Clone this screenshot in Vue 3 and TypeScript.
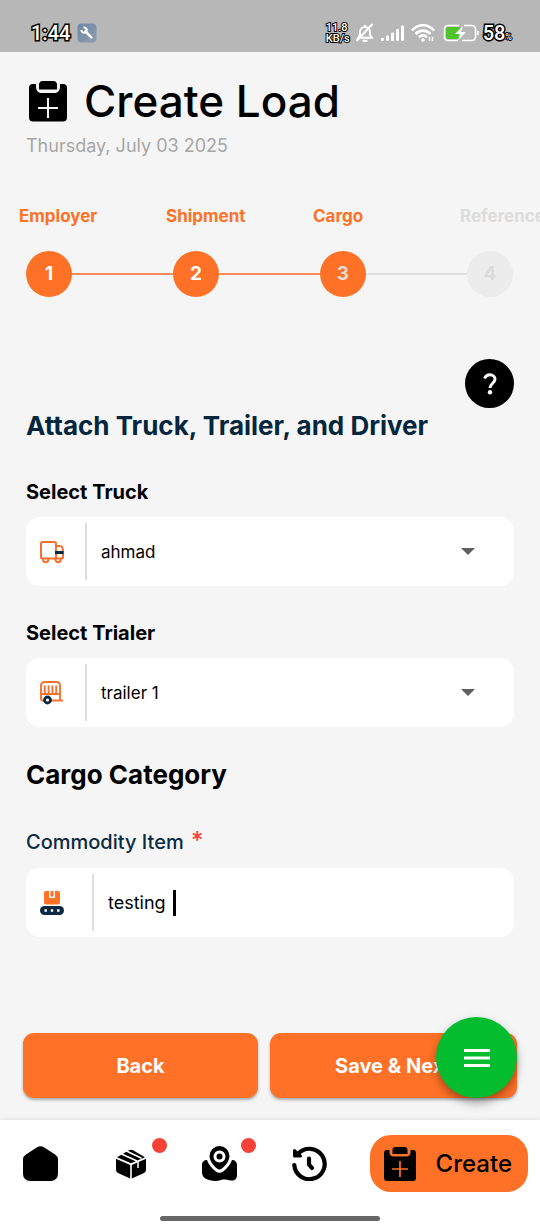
<script setup lang="ts">
import { ref } from 'vue'

interface Step {
  label: string
  state: 'done' | 'current' | 'upcoming'
}

const steps: Step[] = [
  { label: 'Employer', state: 'done' },
  { label: 'Shipment', state: 'done' },
  { label: 'Cargo', state: 'current' },
  { label: 'Reference', state: 'upcoming' },
]

const truck = ref('ahmad')
const trailer = ref('trailer 1')
const commodity = ref('testing ')
</script>

<template>
  <div class="screen">
    <header class="status">
      <span class="outlined clock">1:44</span>
      <svg class="tool" viewBox="0 0 20 20" aria-hidden="true">
        <defs>
          <linearGradient id="toolFill" x1="0" y1="0" x2="1" y2="1">
            <stop offset="0" stop-color="#6f87a6" />
            <stop offset="1" stop-color="#8e9db0" />
          </linearGradient>
        </defs>
        <rect x="0.5" y="0.5" width="19" height="19" rx="4" fill="url(#toolFill)" />
        <path d="M8.500 8.500l5.800 5.800" stroke="#fff" stroke-width="2.600" stroke-linecap="round" />
        <circle cx="7" cy="7" r="2.600" fill="none" stroke="#fff" stroke-width="2" stroke-dasharray="12.500 4" stroke-dashoffset="-1.500" transform="rotate(225 7 7)" />
      </svg>
      <div class="status-right">
        <span class="outlined speed">11.8<br />KB/s</span>
        <svg class="bell" viewBox="0 0 20 20" fill="none" stroke="#fff" stroke-width="2" aria-hidden="true">
          <path d="M5 14.500V9a5 5 0 0 1 10 0v3l1.800 2.800H3.200L5 12M10 2v2M1.500 18L17.500 1" />
          <path d="M7.500 17.800h5" stroke-width="2.200" />
        </svg>
        <svg class="signal" viewBox="0 0 24 18" fill="#fff" aria-hidden="true">
          <rect x="0" y="14" width="3" height="3" rx="1" />
          <rect x="5" y="11.500" width="3" height="5.500" rx="1" />
          <rect x="10" y="8.500" width="3" height="8.500" rx="1" />
          <rect x="15" y="5" width="3" height="12" rx="1" />
          <rect x="20" y="1.500" width="3" height="15.500" rx="1" />
        </svg>
        <svg class="wifi" viewBox="0 0 24 20" fill="none" stroke="#fff" stroke-width="2.600" aria-hidden="true">
          <path d="M1 7.500C7 .5 17 .5 23 7.500M4.500 11c4.500-4.500 10.500-4.500 15 0M8 14.300c2.500-2.300 5.500-2.300 8 0" />
          <circle cx="12" cy="17" r="1.300" fill="#fff" stroke-width="1" />
          <path d="M18.500 14v4M21.500 14v4" stroke-width="1.500" />
        </svg>
        <svg class="battery" viewBox="0 0 36 18" aria-hidden="true">
          <path d="M5 3h12v12H5a2 2 0 0 1-2-2V5a2 2 0 0 1 2-2z" fill="#51c32b" />
          <path d="M16 1.500H5A3.500 3.500 0 0 0 1.500 5v8A3.500 3.500 0 0 0 5 16.500h10M21 1.500h8A3.500 3.500 0 0 1 32.500 5v8a3.500 3.500 0 0 1-3.500 3.500H19" fill="none" stroke="#fff" stroke-width="1.600" />
          <path d="M20 2l-8 8h5l-2 6.500 8-8.500h-5z" fill="#fff" />
          <path d="M34.800 7v4" stroke="#fff" stroke-width="1.800" />
        </svg>
        <span class="outlined percent">58<small>%</small></span>
      </div>
    </header>

    <main class="content">
      <div class="title-row">
        <svg class="title-icon" viewBox="0 0 38 41" aria-hidden="true">
          <path d="M4 3h3v2.500C7 9.500 9 12 12.500 12h13c3.500 0 5.500-2.500 5.500-6.500V3h3a4 4 0 0 1 4 4v29.500a4 4 0 0 1-4 4H4a4 4 0 0 1-4-4V7a4 4 0 0 1 4-4z" />
          <path d="M14 0h10a4 4 0 0 1 4 4v4.500H10V4a4 4 0 0 1 4-4z" />
          <path d="M19 17v20M9 27h20" stroke="#f5f5f5" stroke-width="2" />
        </svg>
        <h1>Create Load</h1>
      </div>
      <p class="date">Thursday, July 03 2025</p>

      <ol class="steps">
        <li v-for="(step, i) in steps" :key="step.label" :class="['step', step.state]">
          <span class="step-label">{{ step.label }}</span>
          <span class="step-track">
            <span class="step-dot">{{ i + 1 }}</span>
            <span v-if="i < steps.length - 1" class="step-line"></span>
          </span>
        </li>
      </ol>

      <button class="help" type="button" aria-label="Help">
        <svg viewBox="0 0 14 22" aria-hidden="true">
          <path d="M1.600 5.500C2.500 3 4.500 1.800 7 1.800c3 0 5 1.900 5 4.500 0 3.800-5 4.200-5 8.700" fill="none" stroke="#fff" stroke-width="3" />
          <circle cx="7" cy="19.300" r="2.200" fill="#fff" />
        </svg>
      </button>

      <h2 class="attach">Attach Truck, Trailer, and Driver</h2>

      <label class="label strong" for="truck">Select Truck</label>
      <div class="field">
        <span class="field-icon">
          <svg viewBox="0 0 24 24" fill="none" stroke="#f6712f" stroke-width="2" aria-hidden="true">
            <path d="M3 18.500H2.500A1.500 1.500 0 0 1 1 17V3.500A1.500 1.500 0 0 1 2.500 2h12A1.500 1.500 0 0 1 16 3.500v15H8.500M16 6h3.500C22 6 23 8.500 23 11v6a1.500 1.500 0 0 1-1.500 1.500H21" />
            <path d="M3 18.500v1a2.600 2.600 0 0 0 5.300 0v-1zM15.500 18.500v1a2.600 2.600 0 0 0 5.300 0v-1z" />
            <path d="M15 12.500h8.500" stroke="#0b2a42" stroke-width="3" />
          </svg>
        </span>
        <select id="truck" v-model="truck">
          <option>ahmad</option>
        </select>
        <svg class="arrow" viewBox="0 0 14 7" aria-hidden="true"><path d="M0 0h14L7 7z" /></svg>
      </div>

      <label class="label strong" for="trailer">Select Trialer</label>
      <div class="field">
        <span class="field-icon">
          <svg viewBox="0 0 24 24" fill="none" stroke="#f6712f" stroke-width="1.900" aria-hidden="true">
            <path d="M4 19.500H2.500A1.500 1.500 0 0 1 1 18V4.500A3.500 3.500 0 0 1 4.500 1h12A3.500 3.500 0 0 1 20 4.500v15M10 19.500h13M1 13h19M4.800 4.500V13M8.600 4.500V13M12.400 4.500V13M16.200 4.500V13" />
            <circle cx="7.500" cy="19" r="3" fill="#fff" stroke="#0b2a42" stroke-width="2.800" />
          </svg>
        </span>
        <select id="trailer" v-model="trailer">
          <option>trailer 1</option>
        </select>
        <svg class="arrow" viewBox="0 0 14 7" aria-hidden="true"><path d="M0 0h14L7 7z" /></svg>
      </div>

      <h2 class="category">Cargo Category</h2>

      <label class="label" for="commodity">Commodity Item <span class="required">*</span></label>
      <div class="field last">
        <span class="field-icon wide">
          <svg viewBox="0 0 24 24" aria-hidden="true">
            <rect x="4" y="0" width="16" height="13.500" rx="2" fill="#ff7126" />
            <path d="M9.800 0v6.300h4.400V0" fill="none" stroke="#fff" stroke-width="1.400" />
            <rect x="0" y="15" width="24" height="9" rx="4.500" fill="#0b2a42" />
            <path d="M4.500 19.500h2.400M10.800 19.500h2.400M17.100 19.500h2.400" stroke="#fff" stroke-width="2.400" />
          </svg>
        </span>
        <input id="commodity" v-model="commodity" type="text" autocomplete="off" />
        <span class="caret"></span>
      </div>

      <div class="actions">
        <button type="button">Back</button>
        <button type="button">Save &amp; Next</button>
        <button class="fab" type="button" aria-label="Menu">
          <svg viewBox="0 0 26 18" aria-hidden="true"><path d="M0 1.500h26M0 9h26M0 16.500h26" stroke="#fff" stroke-width="2.800" /></svg>
        </button>
      </div>
    </main>

    <nav class="nav">
      <div class="nav-row">
        <div class="tabs">
          <a href="#home" aria-label="Home">
            <svg viewBox="0 0 35 35"><path d="M14 1.300a7 7 0 0 1 7 0L32 8.500a6 6 0 0 1 3 5V28a7 7 0 0 1-7 7H7a7 7 0 0 1-7-7V13.500a6 6 0 0 1 3-5z" /></svg>
          </a>
          <a href="#loads" aria-label="Loads">
            <svg viewBox="0 0 35 35">
              <path d="M3 12.800l14.200 6.200V32.500L5 27a3.500 3.500 0 0 1-2-3zM18.800 19L33 12.800V24a3.500 3.500 0 0 1-2 3l-12.200 5.500z" />
              <path d="M4 11.200L16 4.200a4.500 4.500 0 0 1 4 0L32 11.200L18 17.300z" />
              <path d="M8.500 8L24 15M13.500 5L28.500 12.200M25 15.500V22" fill="none" stroke="#fff" stroke-width="1.500" />
            </svg>
            <i class="badge"></i>
          </a>
          <a href="#map" aria-label="Map">
            <svg viewBox="0 0 35 35">
              <path fill-rule="evenodd" d="M17.500 0a10 10 0 0 1 10 10c0 4.500-3.500 9-7.500 12.500a3.800 3.800 0 0 1-5 0C11 19 7.500 14.500 7.500 10a10 10 0 0 1 10-10zm0 4.500a6 6 0 1 0 0 12a6 6 0 1 0 0-12z" />
              <circle cx="17.500" cy="10.500" r="3" />
              <path d="M5 14c1.500 4.500 5 8.500 8.500 11.300a6.500 6.500 0 0 0 8 0C25 22.500 28.500 18.500 30 14c3 0 5 2 5 5v10c0 4-2.500 6-6 5.500c-4-.6-7-1.500-10-.5c-4 1.300-7.500 1.300-11 .2C3 33 0 31 0 26v-7c0-3 2-5 5-5z" />
            </svg>
            <i class="badge"></i>
          </a>
          <a href="#history" aria-label="History">
            <svg viewBox="0 0 35 35" fill="none" stroke="#000" stroke-width="4.200" stroke-linecap="round">
              <path d="M6 8A15.200 15.200 0 1 1 2.300 19M17 12.500v6l3 3.500" />
              <path d="M2.500 4.500v5.500H8.500z" fill="#000" stroke-width="3" stroke-linejoin="round" />
            </svg>
          </a>
        </div>
        <button class="create" type="button">
          <svg viewBox="0 0 32 34" aria-hidden="true">
            <path d="M3 3h2.500v2c0 3 1.500 4.500 4.500 4.500h12c3 0 4.500-1.500 4.500-4.500V3H29a3 3 0 0 1 3 3v25a3 3 0 0 1-3 3H3a3 3 0 0 1-3-3V6a3 3 0 0 1 3-3z" />
            <path d="M11.500 0h9a3 3 0 0 1 3 3v4h-15V3a3 3 0 0 1 3-3z" />
            <path d="M16 14v16M8 22h16" stroke="#ff7126" stroke-width="1.700" />
          </svg>
          <span>Create</span>
        </button>
      </div>
      <div class="home-bar"></div>
    </nav>
  </div>
</template>

<style>
html,
body {
  margin: 0;
  background: #f5f5f5;
}
</style>

<style scoped>
.screen {
  display: flex;
  flex-direction: column;
  min-height: 100vh;
  overflow: hidden;
  background: #f5f5f5;
  color: #000;
  font-family: Inter, "Liberation Sans", sans-serif;
}
* {
  box-sizing: border-box;
}
svg {
  display: block;
  flex: none;
}
button {
  border: 0;
  padding: 0;
  font: inherit;
  color: inherit;
  cursor: pointer;
}
.status {
  display: flex;
  align-items: center;
  height: 52px;
  padding: 13px 28px 0 31px;
  background: #b7b7b7;
}
.outlined {
  color: #fff;
  font-family: Roboto, sans-serif;
  font-weight: 500;
  -webkit-text-stroke: 3px #000;
  paint-order: stroke fill;
}
.clock {
  font-size: 20px;
}
.tool {
  width: 20px;
  height: 20px;
  margin-left: 7px;
}
.status-right {
  display: flex;
  align-items: center;
  margin-left: auto;
}
.speed {
  font-size: 11px;
  line-height: 11px;
  -webkit-text-stroke-width: 2px;
}
.bell {
  width: 20px;
  height: 20px;
  margin-left: 5px;
}
.signal {
  width: 24px;
  height: 18px;
  margin-left: 6px;
}
.wifi {
  width: 24px;
  height: 20px;
  margin-left: 6px;
}
.battery {
  width: 36px;
  height: 18px;
  margin-left: 8px;
}
.percent {
  margin-left: 4px;
  font-size: 20px;
}
.percent small {
  font-size: 9px;
  -webkit-text-stroke-width: 2px;
}
.content {
  flex: 1;
  display: flex;
  flex-direction: column;
  padding: 24px 26px 22px;
}
.title-row {
  display: flex;
  align-items: center;
  gap: 17px;
  padding-left: 3px;
}
.title-icon {
  width: 38px;
  height: 41px;
}
h1,
h2,
p,
ol {
  margin: 0;
}
h1 {
  font-size: 44px;
  line-height: 50px;
  font-weight: 500;
}
.date {
  margin-top: 10px;
  color: #a6a6a6;
  font-size: 18px;
  line-height: 20px;
}
.steps {
  display: flex;
  margin-top: 50px;
  padding: 0;
  list-style: none;
  color: #ff7126;
  font-weight: 700;
}
.step {
  flex: 1;
}
.step:last-child {
  flex: none;
  width: 47px;
}
.step-label {
  display: block;
  margin-left: -7px;
  font-size: 17px;
  line-height: 20px;
  white-space: nowrap;
}
.step-track {
  display: flex;
  align-items: center;
  margin-top: 25px;
}
.step-dot {
  flex: none;
  width: 46px;
  height: 46px;
  border-radius: 50%;
  background: #ff7126;
  color: #fff;
  font-size: 19px;
  line-height: 46px;
  text-align: center;
}
.step-line {
  flex: 1;
  height: 2px;
  background: #fb8b58;
}
.current .step-dot {
  color: #e6dcd6;
}
.current .step-line {
  background: #dedede;
}
.upcoming .step-label {
  color: #dcdcdc;
}
.upcoming .step-dot {
  background: #ececec;
  color: #dcdcdc;
}
.help {
  display: grid;
  place-items: center;
  align-self: flex-end;
  width: 49px;
  height: 49px;
  margin-top: 62px;
  border-radius: 50%;
  background: #000;
}
.help svg {
  width: 14px;
  height: 22px;
}
h2 {
  font-size: 26px;
  line-height: 32px;
  font-weight: 700;
}
.attach {
  margin-top: 2px;
  color: #04263e;
}
.category {
  margin-top: 32px;
}
.label {
  margin-top: 38px;
  color: #0b2a42;
  font-size: 20px;
  line-height: 24px;
  font-weight: 500;
}
.strong {
  color: #000;
  font-weight: 700;
}
.field + .strong {
  margin-top: 35px;
}
.required {
  margin-left: 2px;
  color: #f44336;
  font-size: 24px;
}
.field {
  display: flex;
  align-items: center;
  height: 69px;
  margin-top: 13px;
  padding-right: 39px;
  border-radius: 14px;
  background: #fff;
}
.field.last {
  margin-top: 14px;
}
.field-icon {
  display: flex;
  flex: none;
  align-items: center;
  width: 61px;
  height: 57px;
  margin-right: 14px;
  padding-left: 14px;
  border-right: 2px solid #dedede;
}
.field-icon.wide {
  width: 68px;
}
.field-icon svg {
  width: 24px;
  height: 24px;
}
select,
input {
  border: 0;
  outline: 0;
  padding: 0;
  background: none;
  color: #000;
  font-family: inherit;
  font-size: 17px;
  line-height: 24px;
}
select {
  flex: 1;
  appearance: none;
}
input {
  field-sizing: content;
  font-size: 18px;
  white-space: pre;
  caret-color: transparent;
}
.arrow {
  width: 14px;
  height: 7px;
  fill: #606060;
}
.caret {
  width: 3px;
  height: 26px;
  margin-left: 2px;
  background: #000;
}
.actions {
  position: relative;
  display: grid;
  grid-template-columns: 235fr 247fr;
  gap: 12px;
  margin: auto -3px 0;
}
.actions button {
  height: 65px;
  border-radius: 11px;
  background: #ff7126;
  color: #fff;
  font-size: 20px;
  font-weight: 700;
  box-shadow: 0 2px 3px rgba(0, 0, 0, 0.3);
}
.actions .fab {
  position: absolute;
  right: 0;
  bottom: 0;
  display: grid;
  place-items: center;
  width: 81px;
  height: 81px;
  border-radius: 50%;
  background: #04bd2e;
  box-shadow: 0 5px 10px rgba(0, 0, 0, 0.35);
}
.fab svg {
  width: 26px;
  height: 18px;
}
.nav {
  padding-bottom: 9px;
  background: #fff;
  box-shadow: 0 -1px 3px rgba(0, 0, 0, 0.08);
}
.nav-row {
  display: flex;
  align-items: center;
  gap: 43px;
  padding: 15px 12px 0 23px;
}
.tabs {
  display: flex;
  flex: 1;
  justify-content: space-between;
}
.tabs a {
  position: relative;
}
.tabs svg {
  width: 35px;
  height: 35px;
}
.badge {
  position: absolute;
  top: -8px;
  right: -19px;
  width: 15px;
  height: 15px;
  border-radius: 50%;
  background: #f44336;
}
.create {
  display: flex;
  align-items: center;
  gap: 20px;
  height: 57px;
  padding: 0 16px 0 14px;
  border-radius: 21px;
  background: #ff7126;
  font-size: 24px;
  font-weight: 500;
}
.create svg {
  width: 32px;
  height: 34px;
}
.home-bar {
  width: 220px;
  height: 5px;
  margin: 24px auto 0;
  border-radius: 3px;
  background: #666;
}
</style>
